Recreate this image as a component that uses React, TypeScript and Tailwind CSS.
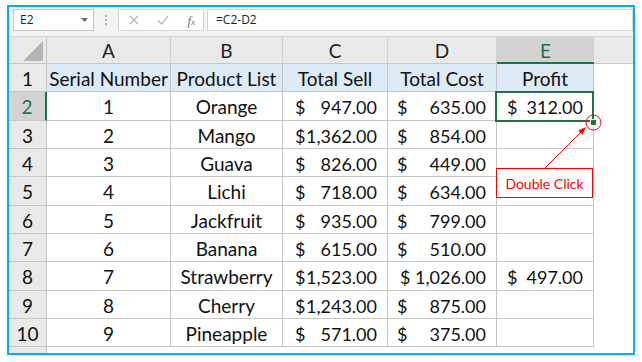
import React from 'react';

type Row = {
  n: string;
  product: string;
  sell: string;
  cost: string;
  profit?: string;
};

const rows: Row[] = [
  { n: '1', product: 'Orange', sell: '947.00', cost: '635.00', profit: '312.00' },
  { n: '2', product: 'Mango', sell: '1,362.00', cost: '854.00' },
  { n: '3', product: 'Guava', sell: '826.00', cost: '449.00' },
  { n: '4', product: 'Lichi', sell: '718.00', cost: '634.00' },
  { n: '5', product: 'Jackfruit', sell: '935.00', cost: '799.00' },
  { n: '6', product: 'Banana', sell: '615.00', cost: '510.00' },
  { n: '7', product: 'Strawberry', sell: '1,523.00', cost: '1,026.00', profit: '497.00' },
  { n: '8', product: 'Cherry', sell: '1,243.00', cost: '875.00' },
  { n: '9', product: 'Pineapple', sell: '571.00', cost: '375.00' },
];

// row heights so that 10 rows land on the screenshot's gridlines
const heights = ['h-[28px]', 'h-[29px]', 'h-[28px]', 'h-[28px]', 'h-[29px]', 'h-[28px]', 'h-[28px]', 'h-[29px]', 'h-[28px]', 'h-[28px]'];

const cell = 'border-r border-b border-[#c6c6c6] flex items-center pt-[3px]';
const money = (v: string) => (
  <>
    <span>$</span>
    <span>{v}</span>
  </>
);

const FormulaBar = () => (
  <div className="h-[29px] bg-[#f3f3f3] flex items-start pt-[2px] pl-[4px]">
    {/* Name box */}
    <div className="w-[81px] h-[22px] bg-white border border-[#c6c6c6] flex items-center justify-between pl-[6px] pr-[5px]">
      <span className="text-[12px] text-[#222] font-['Open_Sans',sans-serif]">E2</span>
      <svg width="7" height="4" viewBox="0 0 7 4"><path d="M0 0h7L3.5 4z" fill="#6e6e6e" /></svg>
    </div>
    <div className="w-[24px] h-[22px] flex flex-col items-center justify-center gap-[2px]">
      <span className="w-[2px] h-[2px] bg-[#b0b0b0]" />
      <span className="w-[2px] h-[2px] bg-[#b0b0b0]" />
      <span className="w-[2px] h-[2px] bg-[#b0b0b0]" />
    </div>
    {/* cancel / enter / fx */}
    <div className="w-[86px] h-[22px] bg-white border border-[#d6d6d6] flex items-center justify-between pl-[10px] pr-[8px]">
      <svg width="10" height="10" viewBox="0 0 10 10"><path d="M1 1l8 8M9 1L1 9" stroke="#b4b4b4" strokeWidth="1.2" /></svg>
      <svg width="12" height="10" viewBox="0 0 12 10"><path d="M1 5.5l3.5 3.5L11 1" stroke="#b4b4b4" strokeWidth="1.2" fill="none" /></svg>
      <span className="font-['Liberation_Serif',serif] italic text-[13px] text-[#707070] leading-none">
        f<span className="text-[9px]">x</span>
      </span>
    </div>
    <div className="ml-[3px] flex-1 h-[22px] bg-white border border-[#d6d6d6] flex items-center pl-[8px]">
      <span className="text-[12px] text-[#222] font-['Open_Sans',sans-serif]">=C2-D2</span>
    </div>
  </div>
);

const HeaderRow = () => (
  <div className="flex h-[27px] bg-[#e9e9e9] border-b border-[#c6c6c6] font-['Lato',sans-serif] text-[19px] text-[#222]">
    <div className="w-[38px] border-r border-[#c6c6c6] relative">
      <svg className="absolute right-[3px] bottom-[2px]" width="20" height="20" viewBox="0 0 20 20">
        <path d="M20 0V20H0z" fill="#b5b5b5" />
      </svg>
    </div>
    <div className="w-[124px] border-r border-[#d0d0d0] flex items-center justify-center pt-[3px]">A</div>
    <div className="w-[112px] border-r border-[#d0d0d0] flex items-center justify-center pt-[3px]">B</div>
    <div className="w-[105px] border-r border-[#d0d0d0] flex items-center justify-center pt-[3px]">C</div>
    <div className="w-[109px] border-r border-[#d0d0d0] flex items-center justify-center pt-[3px]">D</div>
    <div className="w-[97px] bg-[#d3d3d3] border-b-2 border-[#217346] -mb-px flex items-center justify-center pt-[3px] text-[#217346]">E</div>
    <div className="flex-1" />
  </div>
);

export default function App() {
  return (
    <div className="w-[642px] h-[362px] bg-white pt-[5px] pl-[7px]">
      <div className="w-[628px] h-[350px] border-2 border-[#00b0f0] overflow-hidden flex flex-col">
        <FormulaBar />
        <div className="h-px bg-[#d6d6d6]" />
        <HeaderRow />
        <div className="font-['Lato',sans-serif] text-[19px] text-[#111] relative">
          {/* title row */}
          <div className={`flex ${heights[0]}`}>
            <div className={`${cell} w-[38px] bg-[#e9e9e9] justify-center`}>1</div>
            <div className={`${cell} w-[124px] bg-[#ddebf7] justify-center`}>Serial Number</div>
            <div className={`${cell} w-[112px] bg-[#ddebf7] justify-center`}>Product List</div>
            <div className={`${cell} w-[105px] bg-[#ddebf7] justify-center`}>Total Sell</div>
            <div className={`${cell} w-[109px] bg-[#ddebf7] justify-center`}>Total Cost</div>
            <div className={`${cell} w-[97px] bg-[#ddebf7] justify-center`}>Profit</div>
          </div>
          {rows.map((r, i) => {
            const active = i === 0;
            return (
              <div key={r.n} className={`flex ${heights[i + 1]}`}>
                <div
                  className={`w-[38px] border-b border-[#c6c6c6] flex items-center justify-center pt-[3px] ${
                    active ? 'bg-[#d3d3d3] text-[#217346] border-r-2 border-r-[#217346]' : 'bg-[#e9e9e9] border-r'
                  }`}
                >
                  {i + 2}
                </div>
                <div className={`${cell} w-[124px] justify-center`}>{r.n}</div>
                <div className={`${cell} w-[112px] justify-center`}>{r.product}</div>
                <div className={`${cell} w-[105px] justify-between pl-[12px] pr-[10px] text-[18px]`}>{money(r.sell)}</div>
                <div className={`${cell} w-[109px] justify-between ${r.cost.length > 6 ? 'pl-[12px]' : 'pl-[9px]'} pr-[10px] text-[18px]`}>
                  {money(r.cost)}
                </div>
                <div className={`${cell} w-[97px] justify-between pl-[10px] pr-[10px] text-[18px]`}>{r.profit ? money(r.profit) : null}</div>
              </div>
            );
          })}
          <div className="flex h-[6px]">
            <div className="w-[38px] bg-[#e9e9e9] border-r border-[#c6c6c6]" />
          </div>

          {/* selected cell E2 */}
          <div className="absolute left-[486px] top-[27px] w-[99px] h-[31px] border-2 border-[#217346] pointer-events-none" />
          <div className="absolute left-[581px] top-[55px] w-[7px] h-[7px] bg-[#217346] border border-white" />

          {/* callout */}
          <svg className="absolute left-[480px] top-[40px]" width="120" height="80" viewBox="0 0 120 80">
            <circle cx="104.5" cy="18.5" r="7.5" fill="none" stroke="#ff0000" strokeWidth="1" />
            <line x1="56" y1="64" x2="92" y2="28" stroke="#ff0000" strokeWidth="1" />
            <path d="M97 23L89.2 26.6L93.4 30.8z" fill="#ff0000" />
          </svg>
          <div className="absolute left-[487px] top-[104px] w-[97px] h-[30px] bg-white border border-[#ff0000] flex items-center justify-center text-[14px] text-[#ff0000]">
            Double Click
          </div>
        </div>
      </div>
    </div>
  );
}
